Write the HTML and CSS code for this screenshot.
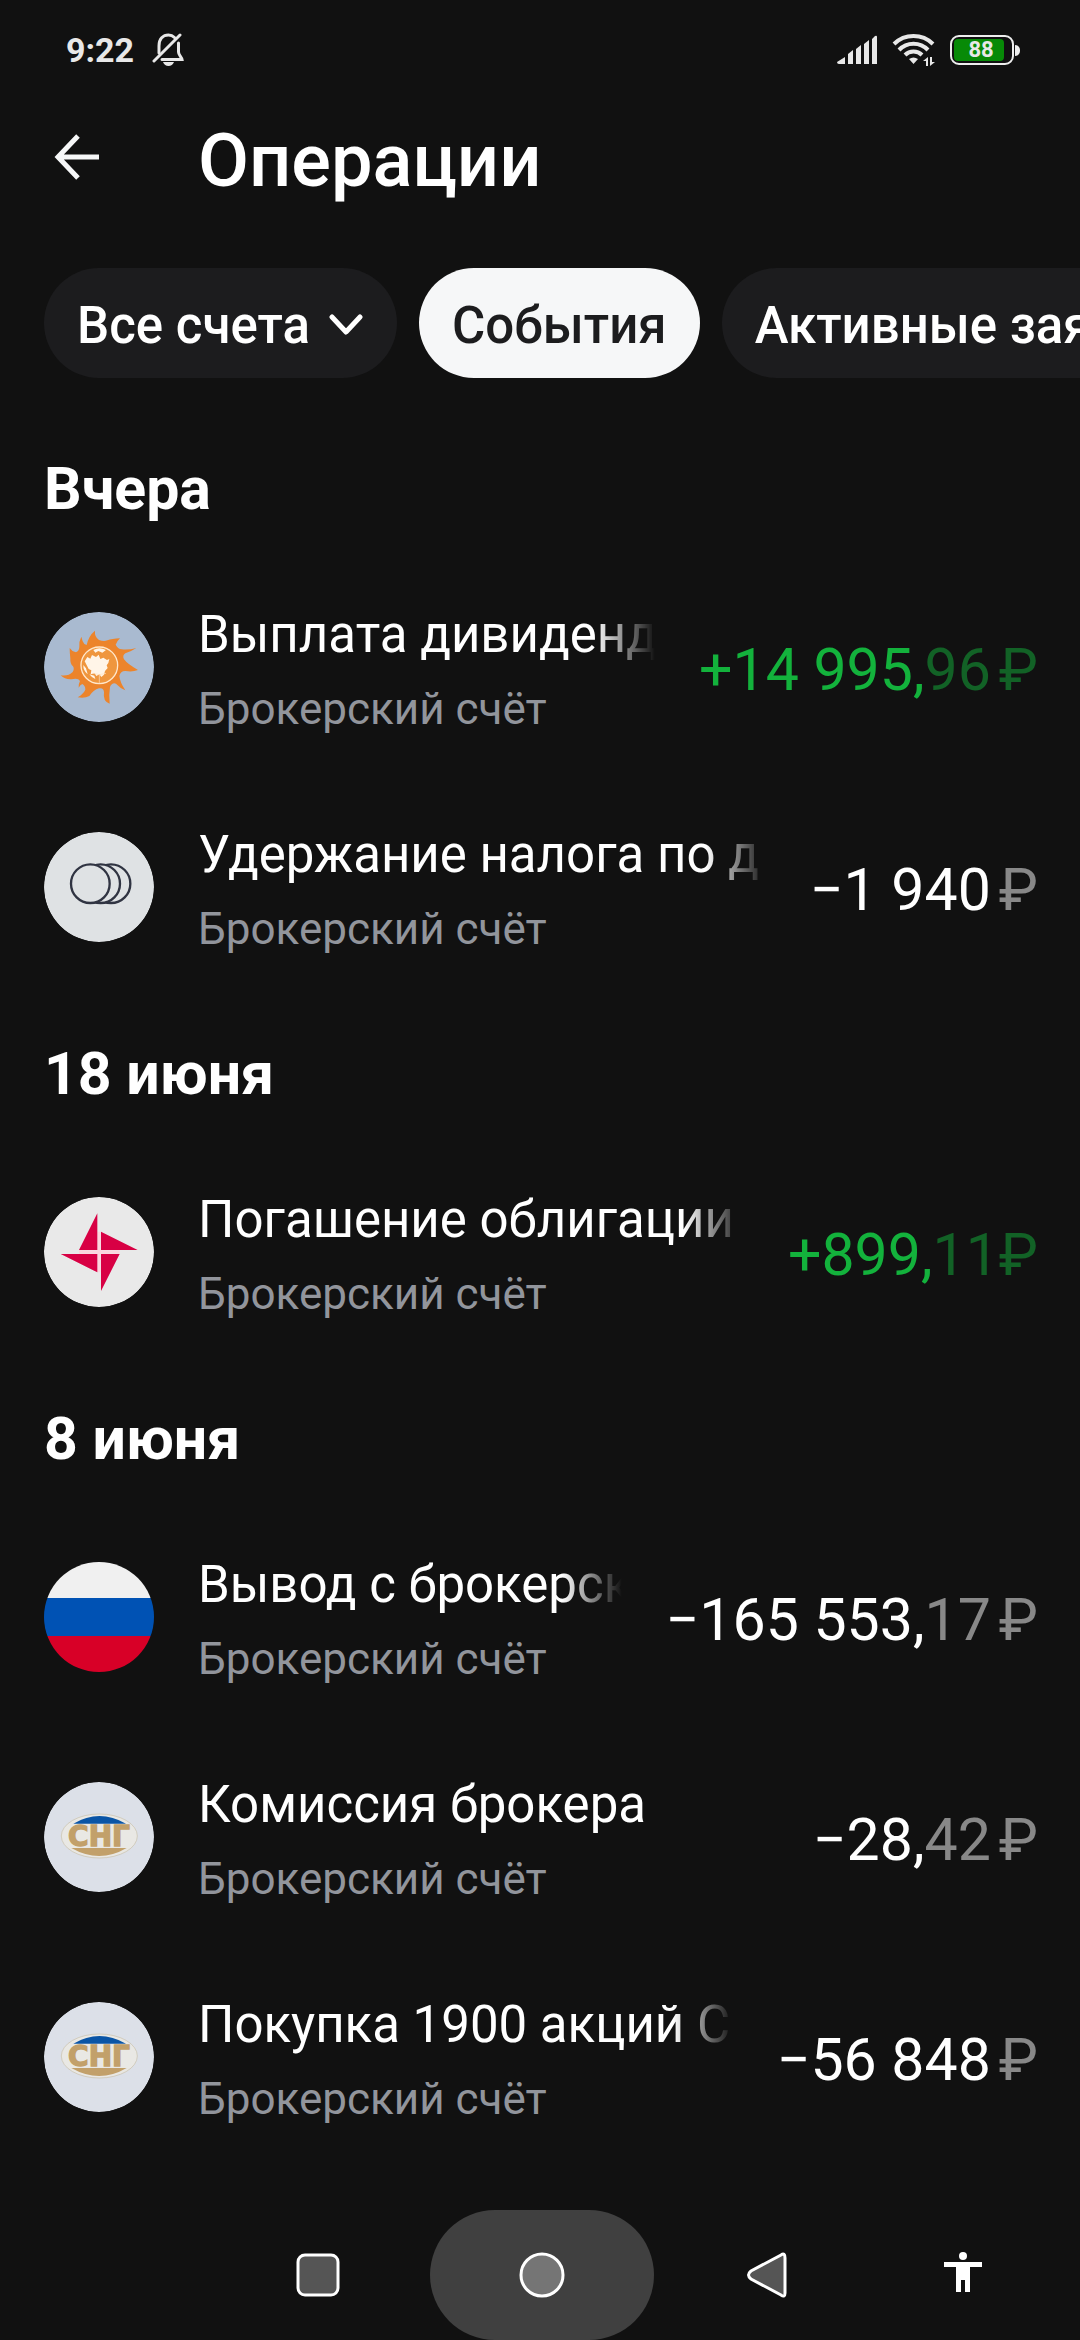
FILE: index.html
```html
<!DOCTYPE html>
<html lang="ru">
<head>
    <meta charset="UTF-8">
    <meta name="viewport" content="width=device-width, initial-scale=1.0">
    <title>Операции</title>
    <link rel="stylesheet" href="styles.css">
</head>
<body>
    <div class="status-bar">
        <div class="status-left">
            <span>9:22</span>
            <svg width="32" height="34" viewBox="0 0 32 34" fill="none" stroke="#e8e8e8" stroke-width="3" stroke-linecap="round">
                <path d="M7 20v-7C7 6 11 2 16.500 2c2.500 0 4.500 1 6 2.500M26.500 10v9c0 3 3 5 3.500 7.500H10"/>
                <path d="M2 28 28 2"/>
                <path d="M11 29h11c-1 2.500-3 4-5.500 4S12 31.500 11 29z" fill="#e8e8e8" stroke="none"/>
            </svg>
        </div>
        <div class="status-right">
            <svg width="41" height="30" viewBox="0 0 41 30" fill="#e8e8e8">
                <path d="M0 27l8-5v7H2q-2 0-2-2zM11 19l5-4v14h-5zM19 14l5-4v19h-5zM27 9l5-4v24h-5zM35 4l3-3q2-1 2 1v27h-5z"/>
            </svg>
            <svg width="44" height="34" viewBox="0 0 44 34" fill="none" stroke="#e8e8e8" stroke-width="4">
                <path d="M2 11a28 28 0 0 1 39 0M7 17a20 20 0 0 1 29 0M13 22a12 12 0 0 1 17 0"/>
                <path d="M17 26q4.500-3 9 0l-4.500 5z" fill="#e8e8e8" stroke="none"/>
                <path d="M36 24v9h-2v-5h-3zM38 24h2v5h3l-5 4z" fill="#e8e8e8" stroke="none"/>
            </svg>
            <div class="battery"><span>88</span></div>
        </div>
    </div>

    <header class="app-bar">
        <button class="back" aria-label="Назад">
            <svg width="46" height="46" viewBox="0 0 46 46" fill="none" stroke="#f6f7f8" stroke-width="5">
                <path d="M45 23H5M24 2 4 23l20 21"/>
            </svg>
        </button>
        <h1>Операции</h1>
    </header>

    <div class="filters">
        <button class="chip">Все счета
            <svg width="36" height="22" viewBox="0 0 36 22" fill="none" stroke="#fff" stroke-width="5" stroke-linecap="round" stroke-linejoin="round">
                <path d="M4 3l14 15L32 3"/>
            </svg>
        </button>
        <button class="chip active">События</button>
        <button class="chip">Активные заявки</button>
    </div>

    <main>
        <section>
            <h2>Вчера</h2>
            <div class="operation">
                <svg class="logo" viewBox="42 66 330 330">
                    <circle cx="207" cy="231" r="165" fill="#a9bad0"/>
                    <path fill="#ec842b" d="M170 165Q176 137 195 122Q193 140 207 150Q222 155 232 151Q246 146 270 145Q262 152 257 164Q263 176 275 178Q298 180 319 174Q304 184 286 190Q276 196 282 208Q292 222 324 240Q307 247 287 243Q272 242 268 258Q270 277 286 301Q272 296 258 281Q246 277 240 291Q236 315 239 341Q218 335 222 307Q221 292 207 295Q190 300 178 318Q164 326 143 322Q160 312 166 299Q166 287 157 282Q151 284 146 293Q146 279 150 273Q145 264 130 267Q107 271 92 256Q116 259 128 246Q134 237 129 229Q120 222 121 205Q119 187 119 174Q125 184 138 187Q147 184 148 171Q146 155 154 140Q157 155 163 162z"/>
                    <circle cx="208" cy="226" r="55" fill="#ef963e" stroke="#ffe7cb" stroke-width="4"/>
                    <path fill="#fff5e8" d="M164 214l8-13 9 5 5-11 12 6 8-7 5 13 9-4 11 7 7-3-3 12-5 7 3 8-8 9-3 11-8 7-6-8-9 5-5-8-12 3 2-12-8-4zM190 180q18-10 38 0l-11 8-12-5-9 5zM160 225l8 10 5 18q-14-12-13-28zM178 253l15 4 3 10q-12-5-18-14z"/>
                    <path d="M208 255v26M190 250q18 8 38 0" stroke="#ffe1bc" stroke-width="2" fill="none"/>
                </svg>
                <div class="info">
                    <div class="name">Выплата дивиденд</div>
                    <div class="account">Брокерский счёт</div>
                </div>
                <div class="amount income">+14 995,<span class="minor">96<span class="currency">₽</span></span></div>
            </div>
            <div class="operation">
                <svg class="logo" viewBox="42 36 330 330">
                    <circle cx="207" cy="201" r="165" fill="#dfe2e4"/>
                    <g fill="#dfe2e4" stroke="#303442" stroke-width="7">
                        <circle cx="243" cy="191" r="58"/>
                        <circle cx="212" cy="191" r="58"/>
                        <circle cx="181" cy="191" r="58"/>
                    </g>
                </svg>
                <div class="info">
                    <div class="name">Удержание налога по д</div>
                    <div class="account">Брокерский счёт</div>
                </div>
                <div class="amount">−1 940<span class="minor currency">₽</span></div>
            </div>
        </section>

        <section>
            <h2>18 июня</h2>
            <div class="operation">
                <svg class="logo" viewBox="42 51 330 330">
                    <circle cx="207" cy="216" r="165" fill="#e9e9e9"/>
                    <path d="M207 155v122M147 216h122" stroke="#fbd5dd" stroke-width="10"/>
                    <path fill="#d80044" d="M202 100v110h-55zM213 155l110 55H213zM92 222h110v55zM213 222h56l-56 111z"/>
                </svg>
                <div class="info">
                    <div class="name">Погашение облигации</div>
                    <div class="account">Брокерский счёт</div>
                </div>
                <div class="amount income">+899,<span class="minor">11₽</span></div>
            </div>
        </section>

        <section>
            <h2>8 июня</h2>
            <div class="operation">
                <div class="logo flag"></div>
                <div class="info">
                    <div class="name">Вывод с брокерск</div>
                    <div class="account">Брокерский счёт</div>
                </div>
                <div class="amount">−165 553,<span class="minor">17<span class="currency">₽</span></span></div>
            </div>
            <div class="operation">
                <svg class="logo" viewBox="42 66 330 330">
                    <circle cx="207" cy="231" r="165" fill="#dce0e8"/>
                    <ellipse cx="208" cy="228" rx="114" ry="66" fill="#e9e8e4" stroke="#c9bfa9" stroke-width="2"/>
                    <path fill="#0a55a6" d="M130 191q78-46 158 0z"/>
                    <path fill="#c2a06a" d="M124 264h166q-82 48-166 0z"/>
                    <text class="logo-text" x="207" y="258" text-anchor="middle">СНГ</text>
                </svg>
                <div class="info">
                    <div class="name">Комиссия брокера</div>
                    <div class="account">Брокерский счёт</div>
                </div>
                <div class="amount">−28,<span class="minor">42<span class="currency">₽</span></span></div>
            </div>
            <div class="operation">
                <svg class="logo" viewBox="42 66 330 330">
                    <circle cx="207" cy="231" r="165" fill="#dce0e8"/>
                    <ellipse cx="208" cy="228" rx="114" ry="66" fill="#e9e8e4" stroke="#c9bfa9" stroke-width="2"/>
                    <path fill="#0a55a6" d="M130 191q78-46 158 0z"/>
                    <path fill="#c2a06a" d="M124 264h166q-82 48-166 0z"/>
                    <text class="logo-text" x="207" y="258" text-anchor="middle">СНГ</text>
                </svg>
                <div class="info">
                    <div class="name">Покупка 1900 акций С</div>
                    <div class="account">Брокерский счёт</div>
                </div>
                <div class="amount">−56 848<span class="minor currency">₽</span></div>
            </div>
        </section>
    </main>

    <nav class="nav-bar">
        <button class="nav-button" aria-label="Недавние">
            <svg width="48" height="48" viewBox="0 0 48 48" fill="#555" stroke="#fff" stroke-width="3">
                <rect x="4" y="4" width="40" height="40" rx="7"/>
            </svg>
        </button>
        <button class="nav-button pressed" aria-label="Домой">
            <svg width="48" height="48" viewBox="0 0 48 48" fill="#757575" stroke="#fff" stroke-width="3">
                <circle cx="24" cy="24" r="21"/>
            </svg>
        </button>
        <button class="nav-button" aria-label="Назад">
            <svg width="48" height="48" viewBox="0 0 48 48" fill="#555" stroke="#fff" stroke-width="3">
                <path d="M38 4q4-3 4 3v35q0 5-4 2L8 28q-5-4 0-8z"/>
            </svg>
        </button>
        <button class="nav-button" aria-label="Специальные возможности">
            <svg width="48" height="48" viewBox="0 0 48 48" fill="#fff">
                <circle cx="24" cy="5" r="4"/>
                <path d="M5 11h38v5H31v25h-5V29h-4v12h-5V16H5z"/>
            </svg>
        </button>
    </nav>
</body>
</html>
```
FILE: styles.css
```css
* {
    box-sizing: border-box;
}
body {
    margin: 0;
    min-height: 100vh;
    display: flex;
    flex-direction: column;
    overflow-x: hidden;
    background-color: #111;
    color: #fff;
    font-family: Roboto, sans-serif;
}
button {
    padding: 0;
    background: none;
    border: none;
    color: inherit;
    font: inherit;
    cursor: pointer;
}
svg {
    display: block;
    flex-shrink: 0;
}
h1,
h2 {
    margin: 0;
}
.status-bar {
    display: flex;
    justify-content: space-between;
    align-items: center;
    height: 100px;
    padding: 0 66px;
    color: #e8e8e8;
    font-size: 34px;
    font-weight: 700;
}
.status-left {
    display: flex;
    align-items: center;
    gap: 18px;
}
.status-right {
    display: flex;
    align-items: center;
    gap: 14px;
}
.battery {
    position: relative;
    width: 64px;
    height: 30px;
    padding: 2px;
    border: 2px solid #eee;
    border-radius: 9px;
    font-size: 22px;
    line-height: 22px;
    text-align: center;
}
.battery span {
    display: block;
    width: 50px;
    height: 22px;
    border-radius: 4px;
    background-color: #078a07;
    padding-left: 4px;
}
/* battery tip */
.battery::after {
    content: "";
    position: absolute;
    right: -8px;
    top: 8px;
    width: 5px;
    height: 11px;
    border-radius: 0 5px 5px 0;
    background-color: #eee;
}
.app-bar {
    display: flex;
    align-items: center;
    height: 114px;
    padding: 0 44px 0 54px;
    gap: 98px;
}
.app-bar h1 {
    padding-top: 8px;
    font-size: 74px;
    font-weight: 500;
    line-height: 84px;
}
.filters {
    display: flex;
    gap: 22px;
    padding: 54px 0 34px 44px;
    overflow: hidden;
}
.chip {
    display: flex;
    align-items: center;
    flex-shrink: 0;
    gap: 18px;
    height: 110px;
    padding: 4px 33px 0;
    border-radius: 55px;
    background-color: #1c1c1e;
    font-size: 51px;
    font-weight: 500;
    white-space: nowrap;
}
.chip.active {
    background-color: #f6f7f8;
    color: #1c1c1e;
}
h2 {
    padding: 42px 44px 34px;
    font-size: 59px;
    font-weight: 700;
    line-height: 69px;
}
.operation {
    display: flex;
    align-items: center;
    height: 220px;
    padding: 0 42px 0 44px;
}
.logo {
    flex-shrink: 0;
    width: 110px;
    height: 110px;
    border-radius: 50%;
}
.logo-text {
    font-family: "DejaVu Sans", sans-serif;
    font-size: 84px;
    font-weight: 700;
    fill: #c2a06a;
    stroke: #c2a06a;
    stroke-width: 4px;
}
.flag {
    background: linear-gradient(#f0f0f0 33%, #0052b4 33% 67%, #d80027 67%);
}
.info {
    flex: 1;
    min-width: 0;
    margin: 0 44px;
    padding-top: 10px;
}
.name {
    overflow: hidden;
    font-size: 51px;
    line-height: 74px;
    white-space: nowrap;
    mask-image: linear-gradient(to left, transparent, #000 60px);
}
.account {
    color: #92959c;
    font-size: 44px;
    line-height: 74px;
}
.amount {
    padding-top: 6px;
    font-size: 59px;
    line-height: 74px;
    white-space: nowrap;
}
.income {
    color: #13b23c;
}
.minor {
    opacity: 0.5;
}
.currency {
    margin-left: 8px;
}
.nav-bar {
    display: grid;
    grid-template-columns: 56fr 56fr 56fr 42fr;
    margin-top: auto;
    padding: 0 3% 0 19%;
}
.nav-button {
    display: flex;
    align-items: center;
    justify-content: center;
    height: 130px;
    border-radius: 65px;
}
.pressed {
    background-color: #404040;
}
```
